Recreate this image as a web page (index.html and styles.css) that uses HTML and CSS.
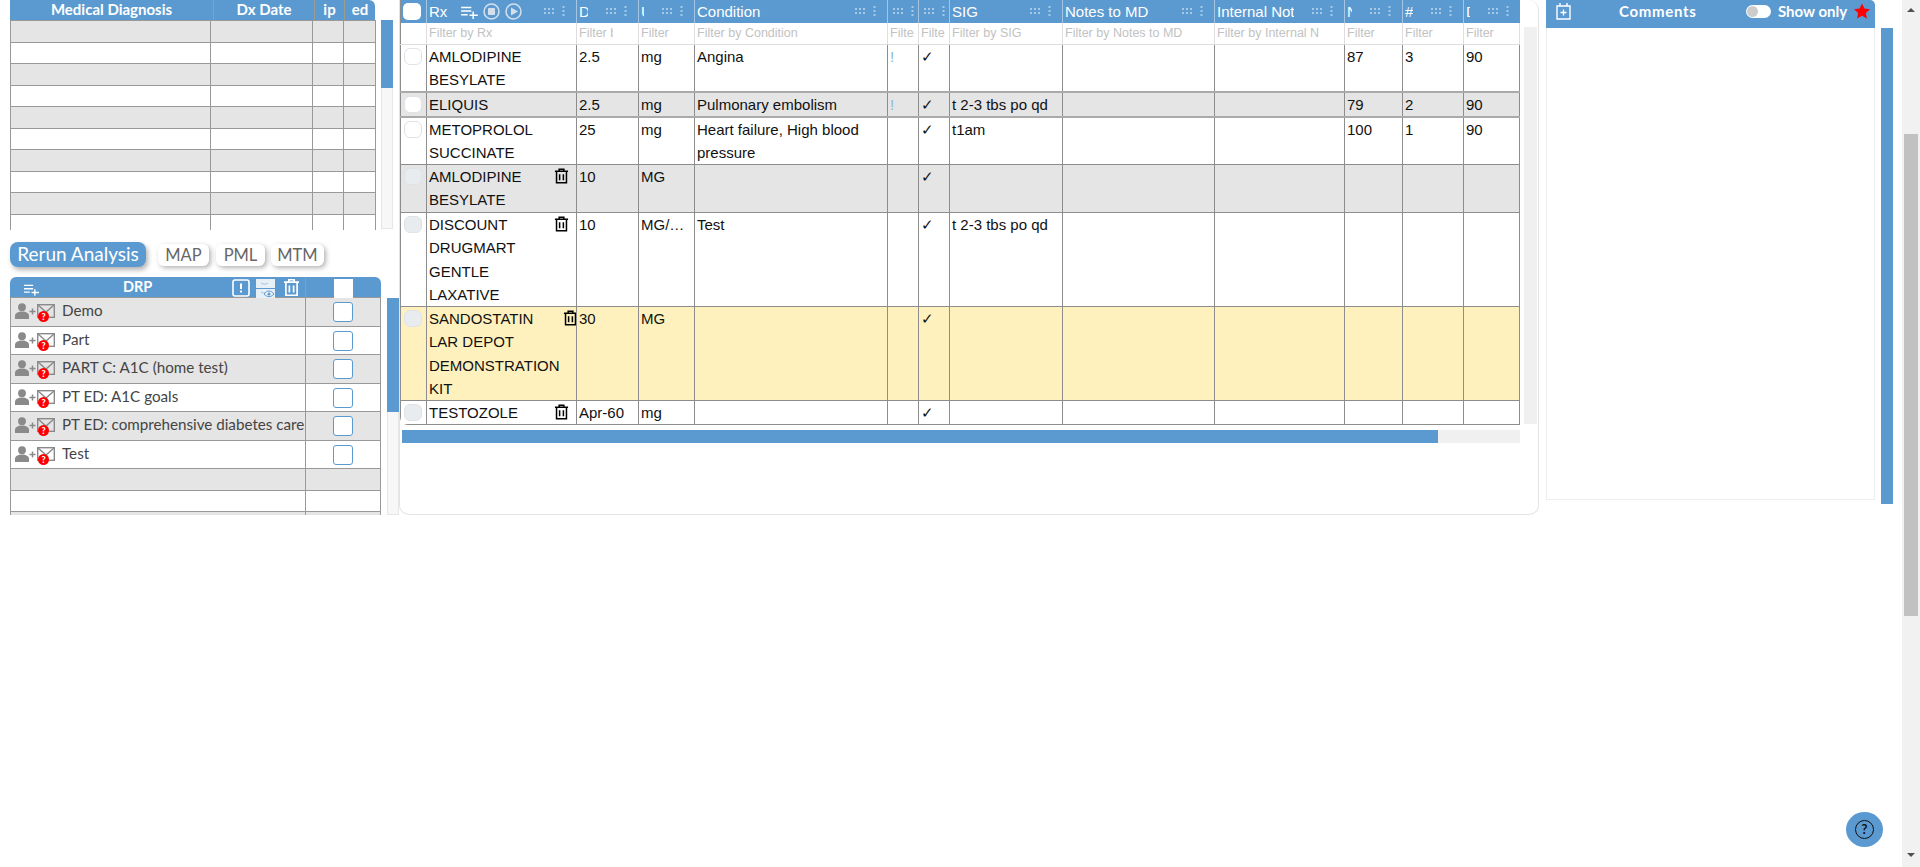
FILE: index.html
```html
<!DOCTYPE html>
<html lang="en">

<head>
  <meta charset="UTF-8" />
  <title>Medication Review</title>
  <link rel="stylesheet" href="styles.css">
</head>

<body>

  <svg class="sprite" width="0" height="0">
    <symbol id="i-trash" viewBox="0 0 16 17">
      <path d="M1 3.500h14M5.500 3.500V1.200h5v2.300M2.700 3.500v12.300h10.600V3.500M6 6.500v6.600M10 6.500v6.600" fill="none" stroke="currentColor" stroke-width="1.600"/>
    </symbol>
    <symbol id="i-list-add" viewBox="0 0 18 14">
      <path d="M0 1.500h11M0 5.500h11M0 9.500h7M13 6v8M9 10h9" fill="none" stroke="currentColor" stroke-width="1.600"/>
    </symbol>
    <symbol id="i-grip" viewBox="0 0 10 6">
      <path d="M0 0h2v2H0zM4 0h2v2H4zM8 0h2v2H8zM0 4h2v2H0zM4 4h2v2H4zM8 4h2v2H8z" fill="currentColor"/>
    </symbol>
    <symbol id="i-kebab" viewBox="0 0 3 10">
      <path d="M.5 0h2v2h-2zM.5 4h2v2h-2zM.5 8h2v2h-2z" fill="currentColor"/>
    </symbol>
    <symbol id="i-person-plus" viewBox="0 0 21 16">
      <circle cx="7" cy="4.200" r="3.900" fill="#8a8a8a"/>
      <path d="M0 16v-3c0-3 3-4.500 7-4.500s7 1.500 7 4.500v3z" fill="#8a8a8a"/>
      <path d="M17.500 5.500v6M14.500 8.500h6" stroke="#8a8a8a" stroke-width="1.500"/>
    </symbol>
    <symbol id="i-mail" viewBox="0 0 18 14">
      <rect x=".7" y=".7" width="16.600" height="12.600" fill="none" stroke="#8a8a8a" stroke-width="1.400"/>
      <path d="M1 1l8 7 8-7" fill="none" stroke="#8a8a8a" stroke-width="1.400"/>
    </symbol>
  </svg>

  <div class="page">

    <div class="left-col">
      <div class="dx-section">
        <div class="dx-table">
          <div class="dx-head">
            <div class="dx-h dx-h-name">Medical Diagnosis</div>
            <div class="dx-h dx-h-date">Dx Date</div>
            <div class="dx-h dx-h-ip">ip</div>
            <div class="dx-h dx-h-ed">ed</div>
          </div>
          <div class="dx-body">
            <div class="dx-row alt"><div></div><div></div><div></div><div></div></div>
            <div class="dx-row"><div></div><div></div><div></div><div></div></div>
            <div class="dx-row alt"><div></div><div></div><div></div><div></div></div>
            <div class="dx-row"><div></div><div></div><div></div><div></div></div>
            <div class="dx-row alt"><div></div><div></div><div></div><div></div></div>
            <div class="dx-row"><div></div><div></div><div></div><div></div></div>
            <div class="dx-row alt"><div></div><div></div><div></div><div></div></div>
            <div class="dx-row"><div></div><div></div><div></div><div></div></div>
            <div class="dx-row alt"><div></div><div></div><div></div><div></div></div>
            <div class="dx-row"><div></div><div></div><div></div><div></div></div>
          </div>
        </div>
        <div class="vbar vbar-dx"><div class="vbar-thumb thumb-dx"></div></div>
      </div>

      <div class="actions">
        <button class="btn-primary">Rerun Analysis</button>
        <button class="btn-small btn-map">MAP</button>
        <button class="btn-small btn-pml">PML</button>
        <button class="btn-small btn-mtm">MTM</button>
      </div>

      <div class="drp-section">
        <div class="drp-table">
          <div class="drp-head">
            <div class="drp-head-main">
              <svg class="drp-add"><use href="#i-list-add"/></svg>
              <span class="drp-title">DRP</span>
              <svg class="drp-alert" viewBox="0 0 18 18">
                <rect x="1" y="1" width="16" height="16" rx="2" fill="none" stroke="#fff" stroke-width="1.600"/>
                <path d="M9 4.500v5.500M9 11.500v2" stroke="#fff" stroke-width="2"/>
              </svg>
              <svg class="drp-paper" viewBox="0 0 19 19">
                <rect width="19" height="19" fill="#e8f0f7"/>
                <path d="M0 9.500h19" stroke="#5b9ad0"/>
                <path d="M5 4c2 1.500 5 1.500 7 0M5 13c2 1 3 1 4 1" fill="none" stroke="#9dbfdd"/>
                <path d="M8 15c3-4 7-4 10 0-3 3.500-7 3.500-10 0z" fill="none" stroke="#5b9ad0"/>
                <circle cx="13" cy="15" r="1.500" fill="#5b9ad0"/>
              </svg>
              <svg class="drp-trash"><use href="#i-trash"/></svg>
            </div>
            <div class="drp-head-check"><span class="drp-head-box"></span></div>
          </div>
          <div class="drp-body">
            <div class="drp-row alt">
              <div class="drp-cell"><span class="drp-icons"><svg class="ic-person"><use href="#i-person-plus"/></svg><svg class="ic-mail"><use href="#i-mail"/></svg><span class="ic-badge">?</span></span>Demo</div>
              <div class="drp-check"><span class="check-box"></span></div>
            </div>
            <div class="drp-row">
              <div class="drp-cell"><span class="drp-icons"><svg class="ic-person"><use href="#i-person-plus"/></svg><svg class="ic-mail"><use href="#i-mail"/></svg><span class="ic-badge">?</span></span>Part</div>
              <div class="drp-check"><span class="check-box"></span></div>
            </div>
            <div class="drp-row alt">
              <div class="drp-cell"><span class="drp-icons"><svg class="ic-person"><use href="#i-person-plus"/></svg><svg class="ic-mail"><use href="#i-mail"/></svg><span class="ic-badge">?</span></span>PART C: A1C (home test)</div>
              <div class="drp-check"><span class="check-box"></span></div>
            </div>
            <div class="drp-row">
              <div class="drp-cell"><span class="drp-icons"><svg class="ic-person"><use href="#i-person-plus"/></svg><svg class="ic-mail"><use href="#i-mail"/></svg><span class="ic-badge">?</span></span>PT ED: A1C goals</div>
              <div class="drp-check"><span class="check-box"></span></div>
            </div>
            <div class="drp-row alt">
              <div class="drp-cell"><span class="drp-icons"><svg class="ic-person"><use href="#i-person-plus"/></svg><svg class="ic-mail"><use href="#i-mail"/></svg><span class="ic-badge">?</span></span>PT ED: comprehensive diabetes care</div>
              <div class="drp-check"><span class="check-box"></span></div>
            </div>
            <div class="drp-row">
              <div class="drp-cell"><span class="drp-icons"><svg class="ic-person"><use href="#i-person-plus"/></svg><svg class="ic-mail"><use href="#i-mail"/></svg><span class="ic-badge">?</span></span>Test</div>
              <div class="drp-check"><span class="check-box"></span></div>
            </div>
            <div class="drp-row drp-empty alt"><div class="drp-cell"></div><div class="drp-check"></div></div>
            <div class="drp-row drp-empty"><div class="drp-cell"></div><div class="drp-check"></div></div>
            <div class="drp-row drp-empty alt"><div class="drp-cell"></div><div class="drp-check"></div></div>
          </div>
        </div>
        <div class="vbar vbar-drp"><div class="vbar-thumb thumb-drp"></div></div>
      </div>
    </div>

    <div class="main-panel">
      <div class="main-top">
        <div class="rx-wrap">
          <table class="rx-table">
            <colgroup>
              <col class="c-check"><col class="c-rx"><col class="c-dose"><col class="c-unit"><col class="c-cond">
              <col class="c-flag"><col class="c-flag"><col class="c-sig"><col class="c-notes"><col class="c-internal">
              <col class="c-n"><col class="c-num"><col class="c-days">
            </colgroup>
            <thead>
              <tr class="head-row">
                <th><span class="head-check"></span></th>
                <th>
                  <div class="th-in">
                    <span class="th-rx">Rx</span>
                    <svg class="rx-add"><use href="#i-list-add"/></svg>
                    <svg class="rx-circle" viewBox="0 0 17 17"><circle cx="8.500" cy="8.500" r="7.500" fill="none" stroke="currentColor" stroke-width="1.500"/><rect x="5" y="5" width="7" height="7" rx="1" fill="currentColor"/></svg>
                    <svg class="rx-circle" viewBox="0 0 17 17"><circle cx="8.500" cy="8.500" r="7.500" fill="none" stroke="currentColor" stroke-width="1.500"/><path d="M6 4.500l7 4-7 4z" fill="currentColor"/></svg>
                    <span class="th-tail"><svg class="grip"><use href="#i-grip"/></svg><svg class="kebab"><use href="#i-kebab"/></svg></span>
                  </div>
                </th>
                <th><div class="th-in"><span class="th-name">Dose</span><span class="th-tail"><svg class="grip"><use href="#i-grip"/></svg><svg class="kebab"><use href="#i-kebab"/></svg></span></div></th>
                <th><div class="th-in"><span class="th-name">Unit</span><span class="th-tail"><svg class="grip"><use href="#i-grip"/></svg><svg class="kebab"><use href="#i-kebab"/></svg></span></div></th>
                <th><div class="th-in"><span class="th-name">Condition</span><span class="th-tail"><svg class="grip"><use href="#i-grip"/></svg><svg class="kebab"><use href="#i-kebab"/></svg></span></div></th>
                <th><div class="th-in"><span class="th-tail tail-narrow"><svg class="grip"><use href="#i-grip"/></svg><svg class="kebab"><use href="#i-kebab"/></svg></span></div></th>
                <th><div class="th-in"><span class="th-tail tail-narrow"><svg class="grip"><use href="#i-grip"/></svg><svg class="kebab"><use href="#i-kebab"/></svg></span></div></th>
                <th><div class="th-in"><span class="th-name">SIG</span><span class="th-tail"><svg class="grip"><use href="#i-grip"/></svg><svg class="kebab"><use href="#i-kebab"/></svg></span></div></th>
                <th><div class="th-in"><span class="th-name">Notes to MD</span><span class="th-tail"><svg class="grip"><use href="#i-grip"/></svg><svg class="kebab"><use href="#i-kebab"/></svg></span></div></th>
                <th><div class="th-in"><span class="th-name">Internal Notes</span><span class="th-tail"><svg class="grip"><use href="#i-grip"/></svg><svg class="kebab"><use href="#i-kebab"/></svg></span></div></th>
                <th><div class="th-in"><span class="th-name">Name</span><span class="th-tail"><svg class="grip"><use href="#i-grip"/></svg><svg class="kebab"><use href="#i-kebab"/></svg></span></div></th>
                <th><div class="th-in"><span class="th-name">#</span><span class="th-tail"><svg class="grip"><use href="#i-grip"/></svg><svg class="kebab"><use href="#i-kebab"/></svg></span></div></th>
                <th><div class="th-in"><span class="th-name">Days</span><span class="th-tail"><svg class="grip"><use href="#i-grip"/></svg><svg class="kebab"><use href="#i-kebab"/></svg></span></div></th>
              </tr>
              <tr class="filter-row">
                <td></td>
                <td><div class="filter">Filter by Rx</div></td>
                <td><div class="filter">Filter by Dose</div></td>
                <td><div class="filter">Filter by Unit</div></td>
                <td><div class="filter">Filter by Condition</div></td>
                <td><div class="filter filter-narrow">Filter</div></td>
                <td><div class="filter filter-narrow">Filter</div></td>
                <td><div class="filter">Filter by SIG</div></td>
                <td><div class="filter">Filter by Notes to MD</div></td>
                <td><div class="filter">Filter by Internal Notes</div></td>
                <td><div class="filter">Filter</div></td>
                <td><div class="filter">Filter</div></td>
                <td><div class="filter">Filter</div></td>
              </tr>
            </thead>
            <tbody>
              <tr>
                <td><span class="row-check"></span></td>
                <td><div class="rx-cell"><span class="rx-name">AMLODIPINE BESYLATE</span></div></td>
                <td>2.5</td><td>mg</td><td>Angina</td><td class="flag">!</td><td>✓</td>
                <td></td><td></td><td></td><td>87</td><td>3</td><td>90</td>
              </tr>
              <tr class="alt row-thick">
                <td><span class="row-check"></span></td>
                <td><div class="rx-cell"><span class="rx-name">ELIQUIS</span></div></td>
                <td>2.5</td><td>mg</td><td>Pulmonary embolism</td><td class="flag">!</td><td>✓</td>
                <td>t 2-3 tbs po qd</td><td></td><td></td><td>79</td><td>2</td><td>90</td>
              </tr>
              <tr>
                <td><span class="row-check"></span></td>
                <td><div class="rx-cell"><span class="rx-name">METOPROLOL SUCCINATE</span></div></td>
                <td>25</td><td>mg</td><td>Heart failure, High blood pressure</td><td></td><td>✓</td>
                <td>t1am</td><td></td><td></td><td>100</td><td>1</td><td>90</td>
              </tr>
              <tr class="alt row-48">
                <td><span class="row-check off"></span></td>
                <td><div class="rx-cell"><span class="rx-name">AMLODIPINE BESYLATE</span><svg class="rx-trash"><use href="#i-trash"/></svg></div></td>
                <td>10</td><td>MG</td><td></td><td></td><td>✓</td>
                <td></td><td></td><td></td><td></td><td></td><td></td>
              </tr>
              <tr class="tall">
                <td><span class="row-check off"></span></td>
                <td><div class="rx-cell"><span class="rx-name">DISCOUNT DRUGMART GENTLE LAXATIVE</span><svg class="rx-trash"><use href="#i-trash"/></svg></div></td>
                <td>10</td><td><div class="unit-clip">MG/ML</div></td><td>Test</td><td></td><td>✓</td>
                <td>t 2-3 tbs po qd</td><td></td><td></td><td></td><td></td><td></td>
              </tr>
              <tr class="warn tall">
                <td><span class="row-check off"></span></td>
                <td><div class="rx-cell"><span class="rx-name">SANDOSTATIN LAR DEPOT DEMONSTRATION KIT</span><svg class="rx-trash"><use href="#i-trash"/></svg></div></td>
                <td>30</td><td>MG</td><td></td><td></td><td>✓</td>
                <td></td><td></td><td></td><td></td><td></td><td></td>
              </tr>
              <tr>
                <td><span class="row-check off"></span></td>
                <td><div class="rx-cell"><span class="rx-name">TESTOZOLE</span><svg class="rx-trash"><use href="#i-trash"/></svg></div></td>
                <td>Apr-60</td><td>mg</td><td></td><td></td><td>✓</td>
                <td></td><td></td><td></td><td></td><td></td><td></td>
              </tr>
            </tbody>
          </table>
        </div>
        <div class="rx-vtrack"></div>
      </div>
      <div class="hbar"><div class="hbar-thumb"></div></div>
    </div>

    <div class="comments">
      <div class="comments-head">
        <svg class="cal-add" viewBox="0 0 15 17">
          <path d="M1 3h13v13H1zM4 0v3M11 0v3M7.500 6.500v6M4.500 9.500h6" fill="none" stroke="#fff" stroke-width="1.400"/>
        </svg>
        <span class="comments-title">Comments</span>
        <span class="toggle"><span class="toggle-knob"></span></span>
        <span class="show-only">Show only</span>
        <svg class="star" viewBox="0 0 24 24"><path d="M12 .6l3.600 7.700 8.400 1-6.200 5.800 1.600 8.300L12 19.300l-7.400 4.100 1.600-8.300L0 9.300l8.400-1z" fill="#f00"/></svg>
      </div>
      <div class="comments-body"></div>
    </div>
    <div class="vbar vbar-comments"></div>

    <div class="page-scroll">
      <span class="arrow-up"></span>
      <div class="page-thumb"></div>
      <span class="arrow-down"></span>
    </div>
  </div>

  <div class="help-btn"><span class="help-ring">?</span></div>

</body>

</html>
```

FILE: styles.css
```css
body {
  margin: 0;
  overflow: hidden;
  font-family: "Lato", sans-serif;
  background: #fff;
}

.sprite {
  position: absolute;
}

.page {
  display: flex;
  align-items: flex-start;
  height: 867px;
  padding-left: 10px;
}

/* left column */
.left-col {
  width: 389px;
  flex: none;
}

.dx-section {
  display: flex;
  height: 230px;
}

.dx-table {
  width: 366px;
}

.dx-head {
  display: grid;
  grid-template-columns: 203px 101px 30px 31px;
  width: 365px;
  height: 20px;
  background: #5b9ad0;
  border-top-right-radius: 6px;
  color: #fff;
  font-size: 15px;
  font-weight: 700;
  line-height: 18px;
  text-align: center;
}

.dx-h {
  border-left: 1px solid #9b9b8f;
  overflow: hidden;
}

.dx-h-name {
  border-left: none;
}

.dx-body {
  height: 210px;
  overflow: hidden;
  border-top: 1px solid #999;
  box-sizing: border-box;
}

.dx-row {
  display: grid;
  grid-template-columns: 200px 102px 31px 32px;
  height: 21.500px;
  box-sizing: border-box;
  border-bottom: 1px solid #999;
  border-right: 1px solid #999;
}

.dx-row div {
  border-left: 1px solid #999;
}

.alt {
  background: #e5e5e5;
}

.vbar {
  width: 12px;
  background: #f7f7f7;
  box-sizing: border-box;
  flex: none;
}

.vbar-dx {
  height: 209px;
  margin: 20px 0 0 5px;
  border: 1px solid #e6e6e6;
  border-top: none;
}

.vbar-thumb {
  background: #5b9ad0;
}

.thumb-dx {
  height: 68px;
  margin: 0 -1px;
}

.actions {
  display: flex;
  align-items: center;
  margin-top: 12px;
  height: 25px;
}

.btn-primary {
  width: 136px;
  height: 25px;
  padding: 0 0 2px;
  border: none;
  border-radius: 8px;
  background: #5b9ad0;
  color: #fff;
  font-family: "Lato", sans-serif;
  font-size: 19px;
  box-shadow: 2px 3px 5px rgba(0, 0, 0, 0.3);
}

.btn-small {
  height: 22px;
  padding: 0;
  border: none;
  border-radius: 6px;
  background: #fff;
  color: #666;
  font-family: "Lato", sans-serif;
  font-size: 16.500px;
  box-shadow: 2px 2px 5px rgba(0, 0, 0, 0.3);
}

.btn-map {
  width: 51px;
  margin-left: 12px;
}

.btn-pml {
  width: 49px;
  margin-left: 7px;
}

.btn-mtm {
  width: 53px;
  margin-left: 6px;
}

.drp-section {
  display: flex;
  margin-top: 10px;
  height: 238px;
}

.drp-table {
  width: 371px;
  height: 238px;
  overflow: hidden;
}

.drp-head {
  display: flex;
  height: 20px;
  background: #5b9ad0;
  border-radius: 6px 6px 0 0;
  color: #fff;
}

.drp-head-main {
  display: flex;
  align-items: flex-start;
  width: 295px;
  box-sizing: border-box;
}

.drp-add {
  width: 15px;
  height: 12px;
  margin: 7px 0 0 14px;
}

.drp-title {
  width: 30px;
  margin: 1px 0 0 84px;
  font-size: 14.500px;
  font-weight: 700;
  line-height: 18px;
}

.drp-alert {
  width: 18px;
  height: 18px;
  margin: 2px 0 0 79px;
}

.drp-paper {
  width: 19px;
  height: 19px;
  margin: 2px 0 0 6px;
}

.drp-trash {
  width: 17px;
  height: 19px;
  margin: 1px 0 0 8px;
}

.drp-head-check {
  flex: 1;
  border-left: 1px solid #999;
}

.drp-head-box {
  display: block;
  width: 19px;
  height: 19px;
  margin: 2px 0 0 28px;
  background: #fff;
}

.drp-body {
  border-top: 1px solid #999;
  border-left: 1px solid #999;
  border-right: 1px solid #999;
}

.drp-row {
  display: flex;
  height: 28.500px;
  box-sizing: border-box;
  border-bottom: 1px solid #999;
}

.drp-empty {
  height: 21.500px;
}

.drp-cell {
  display: flex;
  width: 294px;
  flex: none;
  box-sizing: border-box;
  padding-left: 4px;
  color: #444;
  font-size: 15.200px;
  line-height: 24px;
  white-space: nowrap;
  overflow: hidden;
}

.drp-icons {
  position: relative;
  display: flex;
  align-items: flex-start;
  flex: none;
  width: 47px;
  margin-top: 5px;
}

.ic-person {
  width: 21px;
  height: 16px;
}

.ic-mail {
  width: 18px;
  height: 14px;
  margin-left: 1px;
  margin-top: 1px;
}

/* small red badge over the envelope */
.ic-badge {
  position: absolute;
  left: 23px;
  top: 8px;
  width: 11px;
  height: 11px;
  border-radius: 50%;
  background: #f00;
  color: #fff;
  font-size: 9px;
  font-weight: 900;
  line-height: 11px;
  text-align: center;
}

.drp-check {
  flex: 1;
  border-left: 1px solid #999;
}

.check-box {
  display: block;
  width: 20px;
  height: 20px;
  margin: 4px 0 0 27px;
  box-sizing: border-box;
  border: 1px solid #5b9ad0;
  border-radius: 3px;
  background: #fff;
}

.vbar-drp {
  height: 217px;
  margin: 21px 0 0 6px;
  border: 1px solid #e6e6e6;
  border-top: none;
}

.thumb-drp {
  height: 114px;
  margin: 0 -1px;
}

/* main table */
.main-panel {
  width: 1140px;
  height: 515px;
  flex: none;
  box-sizing: border-box;
  border: 1px solid #e3e3e3;
  border-top: none;
  border-radius: 0 10px 10px 10px;
}

.main-top {
  display: flex;
  align-items: flex-start;
}

.rx-wrap {
  width: 1123px;
  overflow: hidden;
  border-radius: 0 0 0 8px;
  flex: none;
}

.rx-table {
  width: 1119px;
  table-layout: fixed;
  border-collapse: collapse;
  font-family: "Liberation Sans", sans-serif;
  font-size: 15px;
  line-height: 23px;
  color: #111;
}

.c-check { width: 26px; }
.c-rx { width: 150px; }
.c-dose { width: 62px; }
.c-unit { width: 56px; }
.c-cond { width: 193px; }
.c-flag { width: 31px; }
.c-sig { width: 113px; }
.c-notes { width: 152px; }
.c-internal { width: 130px; }
.c-n { width: 58px; }
.c-num { width: 61px; }
.c-days { width: 56px; }

.rx-table td {
  padding: 0 3px 0 2px;
  border: 1px solid #8d8d8d;
  vertical-align: top;
  overflow: hidden;
}

.rx-table tbody tr {
  border-bottom: 1px solid #a6a6a6;
}

.rx-table tbody tr.row-thick td {
  border-top: 2px solid #aaa;
  border-bottom: 2px solid #aaa;
}

.row-48 {
  height: 48px;
}

.tall {
  height: 94px;
}

.tall .rx-name {
  line-height: 23.250px;
}

.warn {
  background: #fff1bd;
}

.head-row {
  height: 23px;
  background: #5b9ad0;
}

.rx-table th {
  padding: 0;
  height: 23px;
  border-left: 1px solid #a4c6e4;
  color: #fff;
  font-weight: 400;
  text-align: left;
  overflow: hidden;
}

.rx-table th:first-child {
  border-left: 1px solid #8d8d8d;
}

.head-check {
  display: block;
  width: 18px;
  height: 17px;
  margin: 0 0 0 2px;
  background: #fff;
  border-radius: 5px;
}

.th-in {
  display: flex;
  align-items: center;
  height: 22px;
  padding: 0 0 1px 2px;
}

.th-name {
  flex: 1;
  min-width: 0;
  overflow: hidden;
  white-space: nowrap;
}

.th-rx {
  width: 32px;
}

.rx-add {
  width: 17px;
  height: 13px;
  margin-top: 3px;
  color: #fff;
}

.rx-circle {
  width: 17px;
  height: 17px;
  margin-left: 5px;
  color: #d4e1ec;
}

.th-tail {
  display: flex;
  align-items: center;
  justify-content: flex-end;
  flex: none;
  width: 50px;
  box-sizing: border-box;
  padding-right: 11px;
  color: #a8c9e6;
}

.th-in > .rx-circle + .th-tail {
  flex: 1;
  width: auto;
}

.tail-narrow {
  width: 28px;
  padding-right: 4px;
}

.grip {
  width: 10px;
  height: 6px;
}

.kebab {
  width: 3px;
  height: 10px;
  margin-left: 8px;
}

.filter-row {
  height: 21px;
  font-size: 12.500px;
  color: #c2c2c2;
}

.rx-table .filter-row td {
  border-color: #dedede;
  border-top: none;
  line-height: 21px;
}

.rx-table .filter-row td:first-child {
  border-left-color: #8d8d8d;
}

.filter {
  width: calc(100% - 22px);
  white-space: nowrap;
  overflow: hidden;
}

.filter-narrow {
  width: 24px;
}

.row-check {
  display: block;
  width: 18px;
  height: 17px;
  margin: 3px 0 0 1px;
  box-sizing: border-box;
  border: 1px solid #dfe3e8;
  border-radius: 6px;
  background: #fff;
}

.row-check.off {
  background: #e9ecef;
}

.rx-cell {
  display: flex;
  align-items: flex-start;
}

.rx-name {
  flex: 0 0 122px;
}

.rx-trash {
  width: 15px;
  height: 16px;
  flex: none;
  margin: 3px 0 0 3px;
  color: #000;
}

.flag {
  color: #88b9e0;
}

.unit-clip {
  width: 45px;
  overflow: hidden;
  white-space: nowrap;
  text-overflow: ellipsis;
}

.rx-vtrack {
  width: 13px;
  height: 397px;
  margin: 27px 0 0 1px;
  background: #f0f0f0;
  flex: none;
}

.hbar {
  width: 1118px;
  height: 13px;
  margin: 5px 0 0 2px;
  background: #f0f0f0;
}

.hbar-thumb {
  width: 1036px;
  height: 13px;
  background: #5b9ad0;
}

/* comments */
.comments {
  width: 329px;
  flex: none;
  margin-left: 7px;
}

.comments-head {
  display: flex;
  align-items: center;
  height: 28px;
  background: #5b9ad0;
  border-top-right-radius: 5px;
  color: #fff;
  font-size: 15px;
  font-weight: 700;
}

.cal-add {
  width: 15px;
  height: 17px;
  margin: -5px 0 0 10px;
}

.comments-title {
  width: 73px;
  margin: -6px 0 0 48px;
  letter-spacing: 0.700px;
  white-space: nowrap;
}

.toggle {
  display: block;
  width: 25px;
  height: 13px;
  margin: -6px 0 0 54px;
  border-radius: 7px;
  background: #fff;
}

.toggle-knob {
  display: block;
  width: 11px;
  height: 11px;
  margin: 1px 0 0 1px;
  border-radius: 50%;
  background: #ccc;
}

.show-only {
  width: 70px;
  margin: -6px 0 0 7px;
  white-space: nowrap;
}

.star {
  width: 16px;
  height: 16px;
  margin: -6px 0 0 6px;
}

.comments-body {
  height: 472px;
  box-sizing: border-box;
  border: 1px solid #eee;
  border-top: none;
}

.vbar-comments {
  height: 476px;
  margin: 28px 0 0 6px;
  background: #5b9ad0;
}

/* page scrollbar */
.page-scroll {
  display: flex;
  flex-direction: column;
  align-items: center;
  width: 18px;
  height: 867px;
  margin-left: auto;
  background: #f1f1f1;
  flex: none;
}

.arrow-up {
  width: 0;
  height: 0;
  margin-top: 8px;
  border: 4px solid transparent;
  border-top: none;
  border-bottom-color: #505050;
}

.page-thumb {
  width: 14px;
  height: 482px;
  margin-top: 122px;
  background: #c1c1c1;
}

.arrow-down {
  width: 0;
  height: 0;
  margin-top: 237px;
  border: 4px solid transparent;
  border-bottom: none;
  border-top-color: #505050;
}

/* floating help button */
.help-btn {
  position: fixed;
  left: 1846px;
  top: 812px;
  display: flex;
  align-items: center;
  justify-content: center;
  width: 37px;
  height: 35px;
  border-radius: 50%;
  background: #5b9ad0;
}

.help-ring {
  width: 19px;
  height: 19px;
  box-sizing: border-box;
  border: 1.500px solid #111;
  border-radius: 50%;
  color: #111;
  font-size: 13px;
  font-weight: 700;
  line-height: 16px;
  text-align: center;
}
```
